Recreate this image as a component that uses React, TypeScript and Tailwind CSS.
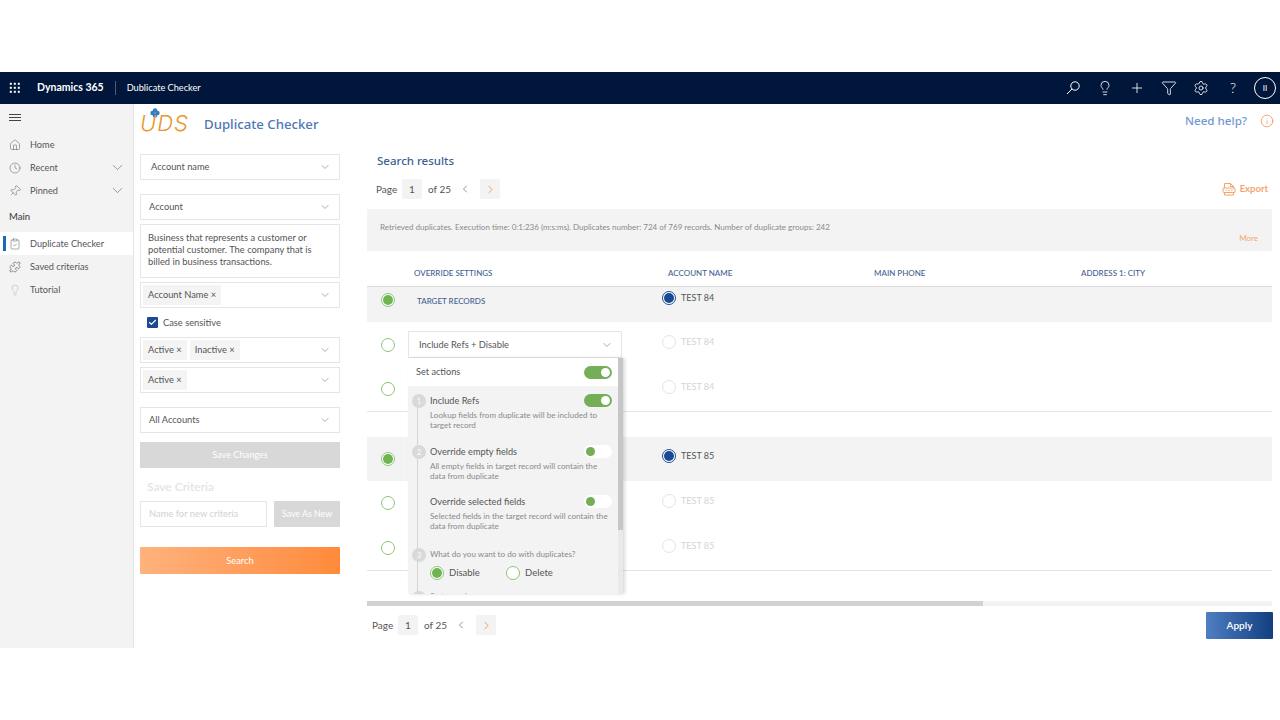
import React from "react";
import { Home, Clock, Pin, ChevronDown, ChevronLeft, ChevronRight, ClipboardCheck, Puzzle, Lightbulb, Plus, Filter, Settings, Info, Check } from "lucide-react";

const Chevron = () => <ChevronDown size={12} strokeWidth={1.25} className="text-[#777] shrink-0" />;

function Waffle() {
  return (
    <svg width="12" height="12" viewBox="0 0 12 12" fill="#fff">
      {[1, 5, 9].map((y) => [1, 5, 9].map((x) => <rect key={`${x}${y}`} x={x - 0.2} y={y - 0.2} width="2" height="2" />))}
    </svg>
  );
}

function NavItem({ icon, label, chevron, active }: { icon: React.ReactNode; label: string; chevron?: boolean; active?: boolean }) {
  return (
    <div className={`relative h-[23px] flex items-center text-[9.2px] text-[#555] pl-[9px] ${active ? "bg-white" : ""}`}>
      {active && <div className="absolute left-[3px] top-[4px] w-[3px] h-[15px] bg-[#2266b8]" />}
      <span className="w-[12px] flex justify-center text-[#555]">{icon}</span>
      <span className="ml-[9px] flex-1">{label}</span>
      {chevron && <ChevronDown size={17} strokeWidth={0.9} className="mr-[7px] text-[#666]" />}
    </div>
  );
}

function Tag({ children }: { children: React.ReactNode }) {
  return <span className="h-[20px] flex items-center px-[5px] mr-[3px] bg-[#f4f4f4] text-[9.3px] text-[#555] whitespace-nowrap">{children} ×</span>;
}

function Box({ children, className = "" }: { children: React.ReactNode; className?: string }) {
  return (
    <div className={`h-[26px] border border-[#e6e6e6] flex items-center justify-between pr-[8px] bg-white ${className}`}>
      <div className="flex items-center text-[9.3px] text-[#555]">{children}</div>
      <Chevron />
    </div>
  );
}

function Pager({ className = "" }: { className?: string }) {
  return (
    <div className={`flex items-center text-[10px] text-[#555] ${className}`}>
      <span className="w-[21px]">Page</span>
      <span className="w-[20px] h-[20px] ml-[5px] bg-[#f3f3f3] rounded-[2px] flex items-center justify-center">1</span>
      <span className="ml-[6px]">of 25</span>
      <ChevronLeft size={12} strokeWidth={1.25} className="ml-[8px] text-[#555]" />
      <span className="w-[20px] h-[20px] ml-[9px] bg-[#f3f3f3] rounded-[2px] flex items-center justify-center">
        <ChevronRight size={13} strokeWidth={1.5} className="text-[#ee8a45]" />
      </span>
    </div>
  );
}

function Radio({ on, faint }: { on?: boolean; faint?: boolean }) {
  return (
    <span className={`w-[14px] h-[14px] rounded-full border flex items-center justify-center shrink-0 bg-white ${faint ? "border-[#e4e4e4]" : "border-[#8cc47a]"}`}>
      {on && <span className="w-[10px] h-[10px] rounded-full bg-[#6fb451]" />}
    </span>
  );
}

function BlueRadio() {
  return (
    <span className="w-[14px] h-[14px] rounded-full border border-[#1f4e96] flex items-center justify-center shrink-0 bg-white">
      <span className="w-[10px] h-[10px] rounded-full bg-[#1b4a92]" />
    </span>
  );
}

function Toggle({ on }: { on?: boolean }) {
  return (
    <span className={`w-[28px] h-[13px] rounded-full flex items-center px-[2px] shrink-0 ${on ? "bg-[#74af58] justify-end" : "bg-white justify-start"}`}>
      <span className={`w-[9px] h-[9px] rounded-full ${on ? "bg-white" : "bg-[#74af58]"}`} />
    </span>
  );
}

function Row({ shaded, border, children, value, faint, h, top = "pt-[13px]" }: { shaded?: boolean; border?: boolean; children?: React.ReactNode; value: string; faint?: boolean; h: string; top?: string }) {
  return (
    <div className={`${h} flex items-start ${shaded ? "bg-[#f3f3f3]" : "bg-white"} ${border ? "border-b border-[#e4e4e4]" : ""}`}>
      {children}
      <div className={`ml-auto w-[610px] flex items-center gap-[5px] text-[9px] ${top}`}>
        {faint ? <Radio faint /> : <BlueRadio />}
        <span className={faint ? "text-[#d4d4d4]" : "text-[#555]"}>{value}</span>
      </div>
    </div>
  );
}

function Step({ n }: { n: string }) {
  return <span className="absolute -left-[18px] top-[1px] w-[14px] h-[14px] rounded-full bg-[#d9d9d9] text-white text-[7px] flex items-center justify-center">{n}</span>;
}

function SubOption({ title, desc, step, on, className = "" }: { title: string; desc: string; step?: string; on?: boolean; className?: string }) {
  return (
    <div className={`relative ${className}`}>
      {step && <Step n={step} />}
      <div className="flex items-center justify-between pr-[6px] h-[15px] text-[9.2px] text-[#555]">
        <span>{title}</span>
        <Toggle on={on} />
      </div>
      <p className="mt-[3px] pr-[4px] text-[8.1px] leading-[9.5px] text-[#8a8a8a]">{desc}</p>
    </div>
  );
}

export default function App() {
  return (
    <div className="w-[1280px] h-[720px] bg-white overflow-hidden flex flex-col font-['Lato','Noto_Sans',sans-serif]">
      <div className="h-[72px] shrink-0" />
      <header className="h-[32px] shrink-0 bg-[#00163a] flex items-center text-white">
        <div className="ml-[9px]"><Waffle /></div>
        <span className="ml-[16px] text-[10.5px] font-bold">Dynamics 365</span>
        <span className="ml-[11px] w-px h-[14px] bg-[#4a5a75]" />
        <span className="ml-[11px] text-[9.2px]">Dublicate Checker</span>
        <div className="ml-auto flex items-center">
          <div className="flex items-center gap-[16px] mr-[13px]">
            <svg width="16" height="16" viewBox="0 0 16 16" fill="none" stroke="currentColor" strokeWidth="1">
              <circle cx="10" cy="6" r="4.2" />
              <path d="M7 9L2 14" />
            </svg>
            <Lightbulb size={16} strokeWidth={1.25} />
            <Plus size={16} strokeWidth={1.25} />
            <Filter size={16} strokeWidth={1.25} />
            <Settings size={16} strokeWidth={1.25} />
            <span className="w-[16px] text-center text-[14px] font-light leading-none">?</span>
          </div>
          <span className="w-[22px] h-[22px] mr-[4px] rounded-full border border-white flex items-center justify-center text-[8px]">II</span>
        </div>
      </header>

      <div className="h-[544px] shrink-0 flex">
        <aside className="w-[134px] shrink-0 bg-[#f3f3f3] border-r border-[#e5e5e5]">
          <div className="h-[28px] pl-[9px] flex items-center">
            <svg width="12" height="8" viewBox="0 0 12 8" fill="#444"><rect width="12" height="1" /><rect y="3" width="12" height="1" /><rect y="6" width="12" height="1" /></svg>
          </div>
          <div className="pt-[1px]">
            <NavItem icon={<Home size={12} strokeWidth={1} />} label="Home" />
            <NavItem icon={<Clock size={12} strokeWidth={1} />} label="Recent" chevron />
            <NavItem icon={<Pin size={12} strokeWidth={1} className="rotate-45" />} label="Pinned" chevron />
          </div>
          <div className="h-[30px] pl-[9px] flex items-center text-[9.5px] font-medium text-[#444]">Main</div>
          <NavItem icon={<ClipboardCheck size={12} strokeWidth={1} />} label="Duplicate Checker" active />
          <NavItem icon={<Puzzle size={12} strokeWidth={1.25} />} label="Saved criterias" />
          <NavItem icon={<Lightbulb size={12} strokeWidth={1} className="text-[#aaa]" />} label="Tutorial" />
        </aside>

        <section className="w-[233px] shrink-0 pl-[6px] pr-[27px]">
          <div className="h-[50px] flex items-start pt-[3px]">
            <div className="relative w-[46px] h-[28px]">
              <svg className="absolute left-[10px] top-[1px]" width="10" height="10" viewBox="0 0 10 10" fill="#2f7fc4">
                <circle cx="5" cy="2.5" r="2.2" /><circle cx="2.5" cy="5" r="2.2" /><circle cx="7.5" cy="5" r="2.2" /><circle cx="5" cy="7.5" r="2.2" />
              </svg>
              <span className="absolute left-0 top-[3px] text-[22px] leading-[26px] italic font-light text-[#e8962e] font-['Inter',sans-serif] tracking-[1px]">UDS</span>
            </div>
            <span className="ml-[18px] mt-[8px] text-[13.2px] font-medium text-[#4f78b8] whitespace-nowrap font-['Noto_Sans',sans-serif]">Duplicate Checker</span>
          </div>

          <Box className="pl-[10px]">Account name</Box>
          <Box className="mt-[14px] pl-[8px]">Account</Box>
          <div className="mt-[4px] h-[54px] border border-[#e6e6e6] px-[7px] pt-[7px] text-[9.35px] leading-[12px] text-[#555]">
            Business that represents a customer or potential customer. The company that is billed in business transactions.
          </div>
          <Box className="mt-[4px] pl-[2px]"><Tag>Account Name</Tag></Box>
          <div className="mt-[8px] h-[13px] pl-[7px] flex items-center gap-[5px] text-[9.3px] text-[#555]">
            <span className="w-[11px] h-[11px] rounded-[1px] bg-[#1b4a92] flex items-center justify-center"><Check size={9} strokeWidth={3} className="text-white" /></span>
            Case sensitive
          </div>
          <Box className="mt-[8px] pl-[2px]"><Tag>Active</Tag><Tag>Inactive</Tag></Box>
          <Box className="mt-[4px] pl-[2px]"><Tag>Active</Tag></Box>
          <Box className="mt-[14px] pl-[8px]">All Accounts</Box>
          <button className="mt-[9px] w-full h-[26px] bg-[#d8d8d8] text-white text-[9.2px]">Save Changes</button>
          <div className="mt-[11px] h-[16px] pl-[7px] flex items-center text-[12px] font-medium text-[#e2e2e2]">Save Criteria</div>
          <div className="mt-[6px] flex justify-between">
            <div className="w-[127px] h-[26px] border border-[#e6e6e6] pl-[8px] flex items-center text-[9.4px] text-[#d2d2d2]">Name for new criteria</div>
            <button className="w-[66px] h-[26px] bg-[#d8d8d8] text-white text-[8.8px]">Save As New</button>
          </div>
          <button className="mt-[20px] w-full h-[27px] rounded-[1px] bg-gradient-to-r from-[#ffb27c] to-[#ff8a39] text-white text-[9.3px]">Search</button>
        </section>

        <main className="w-[905px] shrink-0 flex flex-col">
          <div className="h-[105px] shrink-0 flex flex-col relative">
            <div className="h-[51px] shrink-0 flex justify-end items-start">
              <span className="mt-[8px] text-[11.6px] font-medium text-[#7199d3] font-['Noto_Sans',sans-serif]">Need help?</span>
              <Info size={14} strokeWidth={1.25} className="ml-[13px] mt-[10px] mr-[-2px] text-[#ee8a45]" />
            </div>
            <div className="pl-[10px] h-[12px] flex items-center text-[11.5px] font-medium text-[#3f5f94] font-['Noto_Sans',sans-serif]">Search results</div>
            <div className="mt-[12px] pl-[9px] flex items-center justify-between">
              <Pager />
              <div className="flex items-center gap-[4px] pr-[3px] mr-[1px] text-[9.5px] font-bold text-[#f5a56d]">
                <svg width="14" height="14" viewBox="0 0 14 14" fill="none" stroke="#f29a5c" strokeWidth="0.9">
                  <path d="M2.5 6V1.5H8.5L11.5 4.5V6M8.5 1.5V4.5H11.5" />
                  <rect x="1" y="6" width="12" height="4.5" rx="0.8" />
                  <path d="M2.5 10.5V13H11.5V10.5M3.5 8.2H5M6.2 8.2H7.8M9 8.2H10.5" />
                </svg>
                Export
              </div>
            </div>
          </div>

          <div className="h-[42px] shrink-0 bg-[#f3f3f3] px-[13px] pt-[12px] relative text-[8px] text-[#8a8a8a] whitespace-nowrap">
            Retrieved duplicates. Execution time: 0:1:236 (m:s:ms). Duplicates number: 724 of 769 records. Number of duplicate groups: 242
            <span className="absolute right-[14px] top-[23px] text-[#f5a56d]">More</span>
          </div>

          <div className="h-[36px] shrink-0 flex items-center border-b border-[#dcdcdc] mt-0 text-[8px] font-medium text-[#3f5f94]">
            <span className="ml-[47px] w-[254px] pt-[9px]">OVERRIDE SETTINGS</span>
            <span className="w-[206px] pt-[9px]">ACCOUNT NAME</span>
            <span className="w-[207px] pt-[9px]">MAIN PHONE</span>
            <span className="pt-[9px]">ADDRESS 1: CITY</span>
          </div>

          <Row h="h-[35px]" shaded value="TEST 84" top="pt-[4px]">
            <span className="ml-[14px] mt-[6px]"><Radio on /></span>
            <span className="ml-[22px] mt-[8px] text-[8px] font-medium text-[#3f5f94] whitespace-nowrap">TARGET RECORDS</span>
          </Row>
          <Row h="h-[45px]" value="TEST 84" faint>
            <span className="ml-[14px] mt-[16px]"><Radio /></span>
            <div className="relative ml-[13px] mt-[9px] w-[214px]">
              <div className="h-[27px] border border-[#e6e6e6] flex items-center justify-between pl-[10px] pr-[8px] text-[9.3px] text-[#555] bg-white">
                Include Refs + Disable <Chevron />
              </div>
              <div className="absolute z-10 left-0 top-[27px] w-[215px] h-[236px] overflow-hidden bg-[#f3f3f3] shadow-[2px_0_3px_rgba(0,0,0,0.15)]">
                <div className="absolute right-0 top-0 w-[5px] h-full bg-[#e9e9e9]" />
                <div className="absolute right-0 top-0 w-[5px] h-[172px] bg-[#c6c6c6]" />
                <div className="h-[28px] bg-white flex items-center justify-between pl-[8px] pr-[11px] text-[9.2px] text-[#555]">
                  Set actions <Toggle on />
                </div>
                <div className="relative pl-[22px] pr-[5px] pt-[7px]">
                  <div className="absolute left-[9px] top-[14px] bottom-0 w-[1px] bg-[#d4d4d4]" />
                  <SubOption step="1" on title="Include Refs" desc="Lookup fields from duplicate will be included to target record" />
                  <SubOption className="mt-[14px]" step="2" title="Override empty fields" desc="All empty fields in target record will contain the data from duplicate" />
                  <SubOption className="mt-[13px]" title="Override selected fields" desc="Selected fields in the target record will contain the data from duplicate" />
                  <div className="relative mt-[16px] text-[8.1px] text-[#8a8a8a] leading-[14px]">
                    <Step n="3" />
                    What do you want to do with duplicates?
                  </div>
                  <div className="mt-[5px] flex items-center text-[9.5px] text-[#555]">
                    <Radio on /><span className="ml-[5px] w-[57px]">Disable</span>
                    <Radio /><span className="ml-[5px]">Delete</span>
                  </div>
                  <div className="relative mt-[10px] text-[8.1px] text-[#8a8a8a]"><Step n="4" />Status code</div>
                </div>
              </div>
            </div>
          </Row>
          <Row h="h-[45px]" border value="TEST 84" faint>
            <span className="ml-[14px] mt-[15px]"><Radio /></span>
          </Row>
          <div className="h-[25px] shrink-0" />
          <Row h="h-[44px]" shaded value="TEST 85" top="pt-[12px]">
            <span className="ml-[14px] mt-[15px]"><Radio on /></span>
          </Row>
          <Row h="h-[45px]" value="TEST 85" faint>
            <span className="ml-[14px] mt-[15px]"><Radio /></span>
          </Row>
          <Row h="h-[45px]" border value="TEST 85" faint>
            <span className="ml-[14px] mt-[15px]"><Radio /></span>
          </Row>

          <div className="mt-[30px] h-[5px] shrink-0 bg-[#f3f3f3]">
            <div className="w-[616px] h-full bg-[#d2d2d2]" />
          </div>
          <div className="mt-[6px] flex items-start justify-between">
            <Pager className="ml-[5px] mt-[3px]" />
            <button className="-mr-px w-[67px] h-[27px] rounded-[1px] bg-gradient-to-r from-[#4f7fc2] to-[#123f80] text-white text-[10px] font-semibold">Apply</button>
          </div>
        </main>
      </div>
    </div>
  );
}
